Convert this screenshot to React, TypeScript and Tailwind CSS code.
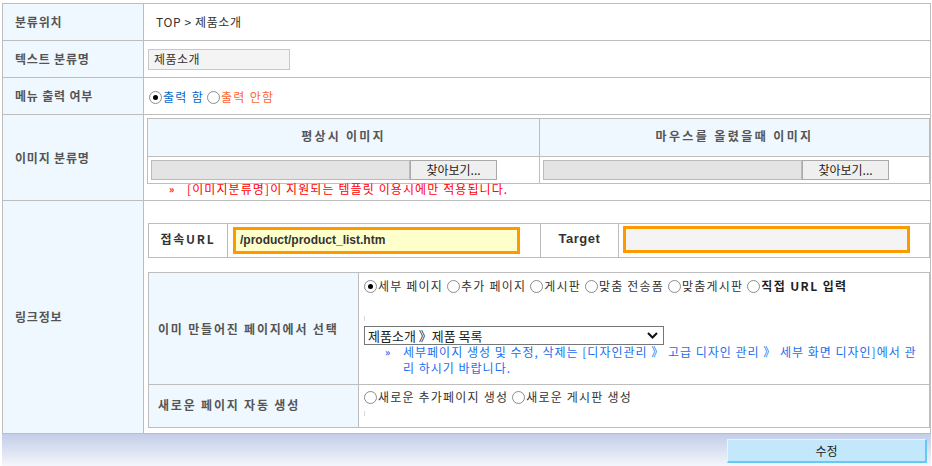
import React from "react";

const line = "border-[#bdbdbd]";

function Radio({ checked = false }: { checked?: boolean }) {
  return (
    <span className="inline-flex w-[13px] h-[13px] shrink-0 items-center justify-center rounded-full border border-[#8c8c8c] bg-white mr-[1px]">
      {checked && <span className="w-[5px] h-[5px] rounded-full bg-black" />}
    </span>
  );
}

function Option({ label, checked, bold }: { label: string; checked?: boolean; bold?: boolean }) {
  return (
    <span className="inline-flex items-center mr-[4px]">
      <Radio checked={checked} />
      <span className={bold ? "font-bold text-[#222] tracking-[1.4px]" : "text-[#333] tracking-[1.2px]"}>{label}</span>
    </span>
  );
}

function Label({ children }: { children: React.ReactNode }) {
  return (
    <div className={`w-[141px] shrink-0 border-r ${line} bg-[#f0f8ff] pl-[12px] flex items-center font-bold text-[#555] tracking-[0.8px]`}>
      {children}
    </div>
  );
}

function FileBox() {
  return (
    <div className="flex pl-[3px]">
      <div className="w-[259px] h-[20px] bg-[#e4e4e4] border border-[#bbb]" />
      <div className="w-[87px] h-[20px] bg-[#efefef] border border-[#aaa] flex items-center justify-center text-[#222]">
        찾아보기...
      </div>
    </div>
  );
}

export default function App() {
  const pages = [
    { label: "세부 페이지", checked: true },
    { label: "추가 페이지" },
    { label: "게시판" },
    { label: "맞춤 전송폼" },
    { label: "맞춤게시판" },
    { label: "직접 URL 입력", bold: true },
  ];

  return (
    <div className="w-[932px] h-[466px] overflow-hidden bg-white pt-[3px] pl-[2px] text-[12px] leading-[16px] text-[#333] font-['Noto_Sans_CJK_KR','Liberation_Sans',sans-serif]">
      <div className={`w-[929px] border-t border-l border-r ${line}`}>
        {/* 분류위치 */}
        <div className={`flex h-[37px] border-b ${line}`}>
          <Label>분류위치</Label>
          <div className="flex-1 flex items-center pl-[12px] pb-[1px] text-[#333] tracking-[0.6px]">TOP &gt; 제품소개</div>
        </div>

        {/* 텍스트 분류명 */}
        <div className={`flex h-[37px] border-b ${line}`}>
          <Label>텍스트 분류명</Label>
          <div className="flex-1 flex items-center pl-[4px]">
            <div className="w-[142px] h-[21px] bg-[#f4f4f4] border border-[#c8c8c8] pl-[5px] flex items-center text-[#333] tracking-[0.5px]">
              제품소개
            </div>
          </div>
        </div>

        {/* 메뉴 출력 여부 */}
        <div className={`flex h-[37px] border-b ${line}`}>
          <Label>메뉴 출력 여부</Label>
          <div className="flex-1 flex items-center pl-[5px] pt-[2px] tracking-[1.3px]">
            <Radio checked />
            <span className="text-[#0066cc] mr-[3px]">출력 함</span>
            <Radio />
            <span className="text-[#ff6633]">출력 안함</span>
          </div>
        </div>

        {/* 이미지 분류명 */}
        <div className={`flex h-[86px] border-b ${line}`}>
          <Label>이미지 분류명</Label>
          <div className="flex-1 pl-[3px] pt-[3px] flex flex-col">
            <div className={`grid grid-cols-[392px_1fr] border ${line}`}>
              <div className={`h-[38px] bg-[#f0f8ff] border-r border-b ${line} pb-[3px] flex items-center justify-center font-bold text-[#555] tracking-[2.2px]`}>
                평상시 이미지
              </div>
              <div className={`h-[38px] bg-[#f0f8ff] border-b ${line} pb-[3px] flex items-center justify-center font-bold text-[#555] tracking-[2.4px]`}>
                마우스를 올렸을때 이미지
              </div>
              <div className={`h-[26px] border-r ${line} flex items-center`}>
                <FileBox />
              </div>
              <div className="h-[26px] flex items-center">
                <FileBox />
              </div>
            </div>
            <div className="pl-[22px] -mt-[2px] leading-[14px] text-[#ff0000] flex items-center">
              <span className="w-[18px] font-bold text-[10px]">»</span>
              <span className="tracking-[1.1px]">[이미지분류명]이 지원되는 템플릿 이용시에만 적용됩니다.</span>
            </div>
          </div>
        </div>

        {/* 링크정보 */}
        <div className={`flex h-[233px] border-b ${line}`}>
          <Label>링크정보</Label>
          <div className="flex-1 pl-[4px] pt-[22px]">
            <div className={`grid grid-cols-[79px_313px_78px_1fr] h-[35px] border ${line}`}>
              <div className={`border-r ${line} pb-[3px] flex items-center justify-center font-bold text-[#333] tracking-[1.8px]`}>접속URL</div>
              <div className={`border-r ${line} flex items-center pl-[5px]`}>
                <div className="w-[287px] h-[27px] border-[3px] border-[#ff9900] bg-[#ffffcc] pl-[4px] pb-[1px] flex items-center font-bold text-[#333] font-['Liberation_Sans',sans-serif]">
                  /product/product_list.htm
                </div>
              </div>
              <div className={`border-r ${line} pb-[4px] flex items-center justify-center font-bold text-[#333] font-['Liberation_Sans',sans-serif] text-[13px] tracking-[0.5px]`}>
                Target
              </div>
              <div className="flex items-center pl-[4px] pb-[2px]">
                <div className="w-[287px] h-[27px] border-[3px] border-[#ff9900] bg-[#f4f4f4]" />
              </div>
            </div>

            <div className={`mt-[14px] border ${line}`}>
              <div className={`flex h-[112px] border-b ${line}`}>
                <div className={`w-[210px] shrink-0 border-r ${line} bg-[#f0f8ff] pl-[9px] flex items-center font-bold text-[#555] tracking-[1.8px]`}>
                  이미 만들어진 페이지에서 선택
                </div>
                <div className="flex-1 pl-[5px] pt-[5px] flex flex-col">
                  <div className="flex items-center h-[16px]">
                    {pages.map((p) => (
                      <Option key={p.label} label={p.label} checked={p.checked} bold={p.bold} />
                    ))}
                  </div>
                  <div className="mt-[22px] w-px h-[5px] bg-[#d8d8d8]" />
                  <div className="mt-[5px] w-[300px] h-[19px] border border-[#767676] flex items-center justify-between pl-[3px] pr-[5px] text-[13px] text-[#222]">
                    <span>제품소개 》제품 목록</span>
                    <svg width="11" height="7" viewBox="0 0 11 7" fill="none">
                      <path d="M1 1l4.5 4.5L10 1" stroke="#111" strokeWidth="2" />
                    </svg>
                  </div>
                  <div className="flex -mt-[1px] pl-[21px] text-[#1a6fee]">
                    <span className="w-[18px] font-bold text-[10px]">»</span>
                    <div className="tracking-[1px]">
                      <div className="whitespace-nowrap">세부페이지 생성 및 수정, 삭제는 [디자인관리 》 고급 디자인 관리 》 세부 화면 디자인]에서 관</div>
                      <div className="whitespace-nowrap">리 하시기 바랍니다.</div>
                    </div>
                  </div>
                </div>
              </div>
              <div className="flex h-[42px]">
                <div className={`w-[210px] shrink-0 border-r ${line} bg-[#f0f8ff] pl-[9px] pb-[2px] flex items-center font-bold text-[#555] tracking-[1.8px]`}>
                  새로운 페이지 자동 생성
                </div>
                <div className="flex-1 pl-[5px] pt-[4px] flex flex-col">
                  <div className="flex items-center h-[16px]">
                    <Option label="새로운 추가페이지 생성" />
                    <Option label="새로운 게시판 생성" />
                  </div>
                  <div className="mt-[6px] w-px h-[5px] bg-[#d8d8d8]" />
                </div>
              </div>
            </div>
          </div>
        </div>
      </div>

      {/* footer */}
      <div className="w-[929px] h-[32px] bg-gradient-to-b from-[#c3cde7] to-[#f4f6fb] flex justify-end pt-[5px] pr-[4px]">
        <div className="w-[200px] h-[24px] bg-[#c4e8fb] border-t border-l border-[#e6f5fd] border-r-2 border-b-2 border-r-[#66c8f5] border-b-[#66c8f5] flex items-center justify-center text-[#222]">
          수정
        </div>
      </div>
    </div>
  );
}
